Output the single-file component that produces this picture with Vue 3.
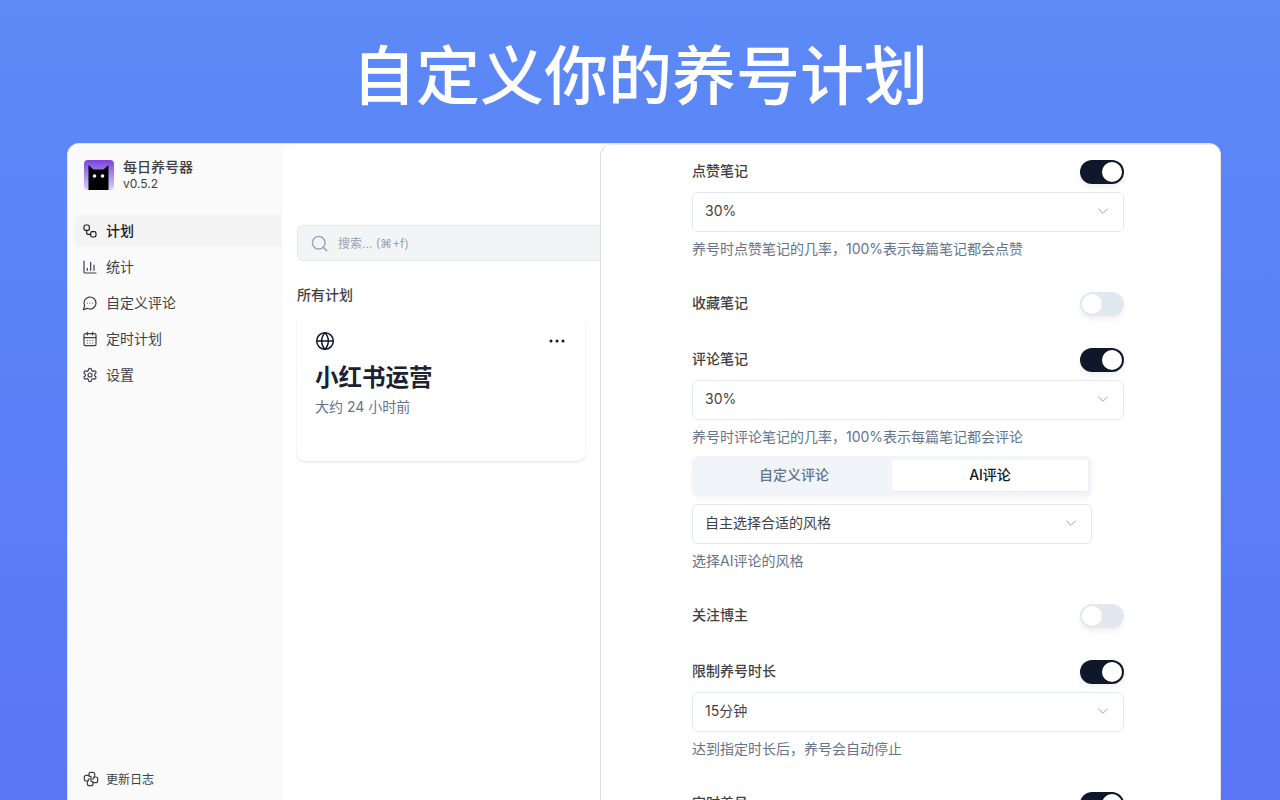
<script setup>
const navItems = [
  { label: '计划', icon: 'flow', active: true },
  { label: '统计', icon: 'bars' },
  { label: '自定义评论', icon: 'chat' },
  { label: '定时计划', icon: 'cal' },
  { label: '设置', icon: 'gear' },
]
const bladeAngles = [0, 90, 180, 270]
</script>

<template>
  <div class="page">
    <h1 class="title">自定义你的养号计划</h1>
    <div class="window">
      <aside class="sidebar">
        <div class="brand">
          <svg class="logo" viewBox="0 0 30 30">
            <defs>
              <linearGradient id="lg" x1="0" y1="0" x2="0" y2="1">
                <stop offset="0" stop-color="#7a45e0" />
                <stop offset="1" stop-color="#dcd0f6" />
              </linearGradient>
            </defs>
            <rect width="30" height="30" rx="4" fill="url(#lg)" />
            <path d="M4.500 30V5l5 4.500h10l5-4.500v25z" fill="#000" />
            <circle cx="10.500" cy="16" r="1.800" fill="#fff" />
            <circle cx="18.500" cy="16" r="1.800" fill="#fff" />
          </svg>
          <div class="brand-text">
            <div class="brand-name">每日养号器</div>
            <div class="brand-ver">v0.5.2</div>
          </div>
        </div>
        <nav class="nav">
          <div v-for="item in navItems" :key="item.label" class="nav-item" :class="{ active: item.active }">
            <svg class="icon" viewBox="0 0 24 24">
              <template v-if="item.icon === 'flow'">
                <rect x="3" y="3" width="8" height="8" rx="2.500" />
                <path d="M7 11v4a2 2 0 0 0 2 2h4" />
                <rect x="13" y="13" width="8" height="8" rx="2.500" />
              </template>
              <template v-else-if="item.icon === 'bars'">
                <path d="M3 3v16a2 2 0 0 0 2 2h16" />
                <path d="M18 17V9M13 17V5M8 17v-3" />
              </template>
              <template v-else-if="item.icon === 'chat'">
                <path d="M7.900 20A9 9 0 1 0 4 16.100L2 22Z" />
                <path d="M8 12h.01M12 12h.01M16 12h.01" />
              </template>
              <template v-else-if="item.icon === 'cal'">
                <path d="M8 2v4M16 2v4" />
                <rect x="3" y="4" width="18" height="18" rx="2" />
                <path d="M3 10h18M8 14h.01M12 14h.01M16 14h.01M8 18h.01M12 18h.01M16 18h.01" />
              </template>
              <template v-else>
                <path d="M12.220 2h-.44a2 2 0 0 0-2 2v.18a2 2 0 0 1-1 1.730l-.43.25a2 2 0 0 1-2 0l-.15-.08a2 2 0 0 0-2.730.73l-.22.38a2 2 0 0 0 .73 2.730l.15.1a2 2 0 0 1 1 1.720v.51a2 2 0 0 1-1 1.740l-.15.09a2 2 0 0 0-.73 2.730l.22.38a2 2 0 0 0 2.730.73l.15-.08a2 2 0 0 1 2 0l.43.25a2 2 0 0 1 1 1.730V20a2 2 0 0 0 2 2h.44a2 2 0 0 0 2-2v-.18a2 2 0 0 1 1-1.730l.43-.25a2 2 0 0 1 2 0l.15.08a2 2 0 0 0 2.730-.73l.22-.39a2 2 0 0 0-.73-2.730l-.15-.08a2 2 0 0 1-1-1.740v-.5a2 2 0 0 1 1-1.740l.15-.09a2 2 0 0 0 .73-2.730l-.22-.38a2 2 0 0 0-2.730-.73l-.15.08a2 2 0 0 1-2 0l-.43-.25a2 2 0 0 1-1-1.730V4a2 2 0 0 0-2-2z" />
                <circle cx="12" cy="12" r="3" />
              </template>
            </svg>
            <span>{{ item.label }}</span>
          </div>
        </nav>
        <div class="changelog">
          <svg class="icon cl" viewBox="0 0 24 24">
            <path
              v-for="a in bladeAngles"
              :key="a"
              :transform="`rotate(${a} 12 12)`"
              d="M12 11V8.500L9 7.500V4.500Q9 2 11.500 2H14.500Q17.500 2 17.500 5V7.500L16.500 9"
            />
          </svg>
          <span>更新日志</span>
        </div>
      </aside>

      <section class="list-panel">
        <div class="search">
          <svg class="search-icon" viewBox="0 0 24 24">
            <circle cx="11" cy="11" r="8" />
            <path d="m21 21-4.300-4.300" />
          </svg>
          <span>搜索... (⌘+f)</span>
        </div>
        <div class="section-title">所有计划</div>
        <div class="card">
          <div class="card-top">
            <svg class="globe" viewBox="0 0 24 24">
              <circle cx="12" cy="12" r="10" />
              <path d="M12 2a14.500 14.500 0 0 0 0 20 14.500 14.500 0 0 0 0-20M2 12h20" />
            </svg>
            <svg class="more" viewBox="0 0 16 4">
              <circle cx="2" cy="2" r="1.500" />
              <circle cx="8" cy="2" r="1.500" />
              <circle cx="14" cy="2" r="1.500" />
            </svg>
          </div>
          <div class="card-title">小红书运营</div>
          <div class="card-sub">大约 24 小时前</div>
        </div>
      </section>

      <section class="settings">
        <div class="form">
          <div class="row"><span class="label">点赞笔记</span><span class="switch on"><i /></span></div>
          <div class="select"><span>30%</span><svg viewBox="0 0 24 24"><path d="m5.500 9 6.500 6.500L18.500 9" /></svg></div>
          <div class="desc">养号时点赞笔记的几率，100%表示每篇笔记都会点赞</div>

          <div class="row gap"><span class="label">收藏笔记</span><span class="switch"><i /></span></div>

          <div class="row gap"><span class="label">评论笔记</span><span class="switch on"><i /></span></div>
          <div class="select"><span>30%</span><svg viewBox="0 0 24 24"><path d="m5.500 9 6.500 6.500L18.500 9" /></svg></div>
          <div class="desc">养号时评论笔记的几率，100%表示每篇笔记都会评论</div>
          <div class="tabs">
            <div class="tab">自定义评论</div>
            <div class="tab active">AI评论</div>
          </div>
          <div class="select narrow"><span>自主选择合适的风格</span><svg viewBox="0 0 24 24"><path d="m5.500 9 6.500 6.500L18.500 9" /></svg></div>
          <div class="desc">选择AI评论的风格</div>

          <div class="row gap"><span class="label">关注博主</span><span class="switch"><i /></span></div>

          <div class="row gap"><span class="label">限制养号时长</span><span class="switch on"><i /></span></div>
          <div class="select"><span>15分钟</span><svg viewBox="0 0 24 24"><path d="m5.500 9 6.500 6.500L18.500 9" /></svg></div>
          <div class="desc">达到指定时长后，养号会自动停止</div>

          <div class="row gap"><span class="label">定时养号</span><span class="switch on"><i /></span></div>
        </div>
      </section>
    </div>
  </div>
</template>

<style>
html, body { margin: 0; height: 100%; overflow: hidden; }
</style>

<style scoped>
.page {
  width: 1280px;
  height: 800px;
  overflow: hidden;
  display: flex;
  flex-direction: column;
  background: linear-gradient(180deg, #5c8af6 0%, #5a76f6 100%);
  font-family: Inter, "Noto Sans CJK SC", sans-serif;
  color: #0f172a;
}
.title {
  margin: 0;
  height: 143px;
  line-height: 143px;
  text-align: center;
  font-size: 64px;
  font-weight: 500;
  color: #fff;
  letter-spacing: 0;
  font-family: "Noto Sans CJK SC", sans-serif;
}
.window {
  width: 1154px;
  margin-left: 67px;
  flex: 1;
  min-height: 0;
  display: flex;
  background: #fafafa;
  border: 1px solid #e4e4e7;
  border-bottom: none;
  border-radius: 12px 12px 0 0;
  box-sizing: border-box;
  overflow: hidden;
}
.sidebar {
  width: 214px;
  flex: none;
  display: flex;
  flex-direction: column;
  padding: 16px 0 0 6px;
  box-sizing: border-box;
}
.brand {
  display: flex;
  align-items: center;
  gap: 9px;
  padding-left: 10px;
  height: 30px;
}
.logo { width: 30px; height: 30px; flex: none; }
.brand-name { font-size: 14px; line-height: 17px; font-weight: 500; color: #3f3f46; margin-top: -1px; }
.brand-ver { font-size: 12px; line-height: 16px; color: #3f3f46; margin-top: 1px; }
.nav { margin-top: 25px; display: flex; flex-direction: column; gap: 4px; }
.nav-item {
  height: 32px;
  display: flex;
  align-items: center;
  gap: 8px;
  padding-left: 8px;
  font-size: 14px;
  color: #3f3f46;
  border-radius: 8px 0 0 8px;
}
.nav-item span { margin-bottom: 2px; }
.nav-item.active { background: #f4f4f5; color: #18181b; font-weight: 500; }
.icon {
  width: 16px;
  height: 16px;
  flex: none;
  fill: none;
  stroke: currentColor;
  stroke-width: 1.800;
  stroke-linecap: round;
  stroke-linejoin: round;
}
.changelog {
  margin-top: auto;
  height: 32px;
  margin-bottom: 5px;
  display: flex;
  align-items: center;
  gap: 7px;
  padding-left: 9px;
  font-size: 12px;
  color: #3f3f46;
}
.changelog span { margin-bottom: 2px; }
.list-panel {
  width: 318px;
  flex: none;
  background: #fff;
  border-radius: 12px 0 0 0;
  padding: 81px 0 0 15px;
  box-sizing: border-box;
}
.search {
  height: 36px;
  background: #f3f4f6;
  border: 1px solid #e5e7eb;
  border-right: none;
  border-radius: 6px 0 0 6px;
  box-sizing: border-box;
  display: flex;
  align-items: center;
  gap: 9px;
  padding-left: 12px;
  font-size: 12px;
  color: #9ca3af;
}
.search span { margin-bottom: 2px; }
.search-icon {
  width: 19px;
  height: 19px;
  fill: none;
  stroke: #9ca3af;
  stroke-width: 1.800;
  stroke-linecap: round;
  stroke-linejoin: round;
}
.section-title {
  margin-top: 24px;
  height: 20px;
  line-height: 20px;
  font-size: 14px;
  font-weight: 500;
  color: #3f3f46;
}
.card {
  margin-top: 8px;
  width: 288px;
  height: 148px;
  background: #fff;
  border-radius: 8px;
  box-shadow: 0 1px 3px rgba(0, 0, 0, 0.1), 0 1px 2px -1px rgba(0, 0, 0, 0.08);
  padding: 18px;
  box-sizing: border-box;
}
.card-top { display: flex; align-items: center; justify-content: space-between; height: 20px; }
.globe {
  width: 20px;
  height: 20px;
  fill: none;
  stroke: #0f172a;
  stroke-width: 1.800;
}
.more { width: 16px; height: 4px; fill: #0f172a; margin-right: 2px; }
.card-title {
  margin-top: 10px;
  height: 36px;
  line-height: 34px;
  font-size: 23.500px;
  font-weight: 600;
  color: #1a2234;
}
.card-sub { height: 20px; line-height: 20px; font-size: 14px; color: #64748b; }
.settings {
  flex: 1;
  min-width: 0;
  background: #fff;
  border-left: 1px solid #dcdce0;
  border-top: 1px solid #ececf0;
  border-radius: 12px 0 0 0;
  padding: 15px 0 0 91px;
  box-sizing: border-box;
  overflow: hidden;
}
.form { width: 432px; }
.row {
  height: 24px;
  display: flex;
  align-items: center;
  justify-content: space-between;
}
.row.gap { margin-top: 32px; }
.label { font-size: 14px; font-weight: 500; color: #3f3f46; margin-bottom: 4px; }
.switch {
  width: 44px;
  height: 24px;
  border-radius: 12px;
  background: #e2e8f0;
  box-shadow: 0 4px 6px -1px rgba(0, 0, 0, 0.07);
  position: relative;
  flex: none;
}
.switch i {
  position: absolute;
  left: 2px;
  top: 2px;
  width: 20px;
  height: 20px;
  border-radius: 50%;
  background: #fff;
}
.switch.on { background: #0f172a; }
.switch.on i { left: 22px; }
.select {
  margin-top: 8px;
  height: 40px;
  border: 1px solid #e2e8f0;
  border-radius: 6px;
  box-sizing: border-box;
  display: flex;
  align-items: center;
  justify-content: space-between;
  padding: 0 12px;
  font-size: 14px;
  color: #3f3f46;
}
.select span { line-height: 20px; margin-bottom: 2px; }
.select svg {
  width: 16px;
  height: 16px;
  margin-bottom: 2px;
  fill: none;
  stroke: #a1a1aa;
  stroke-width: 1.500;
  stroke-linecap: round;
  stroke-linejoin: round;
}
.select.narrow { width: 400px; }
.desc {
  margin-top: 8px;
  line-height: 18px;
  height: 20px;
  font-size: 14px;
  color: #64748b;
}
.tabs {
  margin-top: 8px;
  width: 400px;
  height: 40px;
  background: #f1f5f9;
  border-radius: 6px;
  padding: 4px 4px 5px;
  box-sizing: border-box;
  display: grid;
  grid-template-columns: 1fr 1fr;
  box-shadow: 0 4px 6px -1px rgba(0, 0, 0, 0.04);
}
.tab {
  display: flex;
  align-items: center;
  justify-content: center;
  padding-bottom: 3px;
  font-size: 14px;
  font-weight: 500;
  color: #64748b;
  border-radius: 3px;
}
.tab.active { background: #fff; color: #0f172a; box-shadow: 0 1px 2px rgba(0, 0, 0, 0.05); }
</style>
